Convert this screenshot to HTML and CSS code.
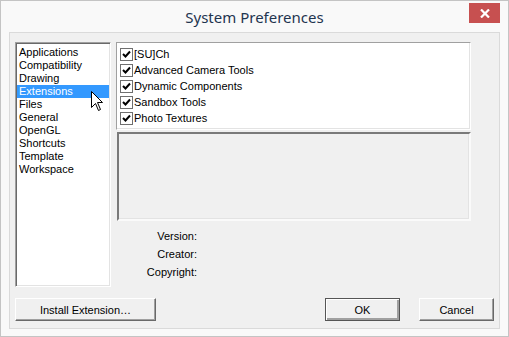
FILE: index.html
```html
<!DOCTYPE html>
<html lang="en">
<head>
    <meta charset="UTF-8">
    <title>System Preferences</title>
    <link rel="stylesheet" href="styles.css">
</head>
<body>
    <div class="window">
        <div class="titlebar">
            <span></span>
            <div class="title">System Preferences</div>
            <div class="close-wrap">
                <button class="close" type="button">
                    <svg width="10" height="9" viewBox="0 0 10 9">
                        <path d="M1 0.5 L9 8.5 M9 0.5 L1 8.5" stroke="#fff" stroke-width="2.2"/>
                    </svg>
                </button>
            </div>
        </div>
        <div class="client">
            <div class="main">
                <ul class="listbox">
                    <li>Applications</li>
                    <li>Compatibility</li>
                    <li>Drawing</li>
                    <li class="selected">Extensions</li>
                    <li>Files</li>
                    <li>General</li>
                    <li>OpenGL</li>
                    <li>Shortcuts</li>
                    <li>Template</li>
                    <li>Workspace</li>
                    <svg class="cursor" width="13" height="20" viewBox="0 0 13 20">
                        <path d="M0.5 0.5 L0.5 16.5 L4.5 12.5 L7.5 19.5 L9.5 18.5 L6.5 11.5 L11.5 11.5 Z" fill="#fff" stroke="#000" stroke-width="1"/>
                    </svg>
                </ul>
                <div class="right">
                    <div class="checklist">
                        <label class="check"><span class="box"></span>[SU]Ch</label>
                        <label class="check"><span class="box"></span>Advanced Camera Tools</label>
                        <label class="check"><span class="box"></span>Dynamic Components</label>
                        <label class="check"><span class="box"></span>Sandbox Tools</label>
                        <label class="check"><span class="box"></span>Photo Textures</label>
                    </div>
                    <div class="description"></div>
                    <div class="info">
                        <div class="info-row">Version:</div>
                        <div class="info-row">Creator:</div>
                        <div class="info-row">Copyright:</div>
                    </div>
                </div>
            </div>
            <div class="buttons">
                <button class="btn install" type="button">Install Extension…</button>
                <div class="btn-group">
                    <button class="btn default" type="button">OK</button>
                    <button class="btn" type="button">Cancel</button>
                </div>
            </div>
        </div>
    </div>
</body>
</html>
```
FILE: styles.css
```css
body {
    margin: 0;
    padding: 0;
    background: #fff;
    font-family: "Liberation Sans", Arial, sans-serif;
    font-size: 11px;
    color: #000;
}
.window {
    width: 509px;
    height: 337px;
    box-sizing: border-box;
    border: 1px solid #c4c4c4;
    background: #f9f9f9;
    padding: 0 8px 8px 8px;
    display: flex;
    flex-direction: column;
}
.titlebar {
    height: 31px;
    display: grid;
    grid-template-columns: 1fr auto 1fr;
}
.title {
    font-family: "Noto Sans", sans-serif;
    font-size: 15px;
    color: #1f3550;
    line-height: 33px;
}
.close-wrap {
    display: flex;
    justify-content: flex-end;
    align-items: flex-start;
}
.close {
    width: 31px;
    height: 20px;
    margin-top: 2px;
    border: none;
    padding: 0;
    background: #c75050;
    display: flex;
    align-items: center;
    justify-content: center;
}
.client {
    flex: 1;
    background: #f0f0f0;
    border: 1px solid #dadada;
    padding: 9px 5px 7px 5px;
    display: flex;
    flex-direction: column;
}
.main {
    display: flex;
    gap: 5px;
    height: 245px;
}
.listbox {
    position: relative;
    width: 96px;
    margin: 0;
    padding: 3px 0 0 0;
    box-sizing: border-box;
    list-style: none;
    background: #fff;
    border-top: 1px solid #a0a0a0;
    border-left: 1px solid #a0a0a0;
    border-right: 1px solid #fff;
    border-bottom: 1px solid #fff;
    box-shadow: inset 1px 1px 0 #696969, inset -1px -1px 0 #e3e3e3;
}
.listbox li {
    height: 13px;
    line-height: 13px;
    padding-left: 2px;
    margin: 0 1px;
}
.listbox li.selected {
    background: #3399ff;
    color: #fff;
}
.cursor {
    position: absolute;
    left: 75px;
    top: 48px;
}
.right {
    width: 355px;
    display: flex;
    flex-direction: column;
}
.checklist {
    height: 88px;
    box-sizing: border-box;
    background: #fff;
    padding: 3px 0 0 3px;
    border-top: 1px solid #a0a0a0;
    border-left: 1px solid #a0a0a0;
    border-right: 1px solid #fff;
    border-bottom: 1px solid #fff;
    box-shadow: inset -1px -1px 0 #e3e3e3;
}
.check {
    display: flex;
    align-items: center;
    height: 16px;
    gap: 1px;
}
.box {
    width: 11px;
    height: 11px;
    border: 1px solid #6f6f6f;
    background: #fff url("data:image/svg+xml,%3Csvg xmlns='http://www.w3.org/2000/svg' width='11' height='11'%3E%3Cpath d='M2 5 L4.5 7.5 L9 2.5' fill='none' stroke='%23000' stroke-width='2'/%3E%3C/svg%3E") no-repeat;
}
.description {
    height: 89px;
    margin-top: 2px;
    box-sizing: border-box;
    margin-left: 1px;
    border-top: 2px solid #7a7a7a;
    border-left: 2px solid #7a7a7a;
    border-right: 2px solid #fafafa;
    border-bottom: 2px solid #fafafa;
    box-shadow: inset -1px -1px 0 #e3e3e3;
}
.info {
    margin-top: 6px;
    width: 81px;
    text-align: right;
}
.info-row {
    height: 18px;
    line-height: 18px;
}
.buttons {
    display: flex;
    justify-content: space-between;
    margin-top: 11px;
}
.btn-group {
    display: flex;
    gap: 19px;
}
.btn {
    height: 23px;
    width: 75px;
    font-family: "Liberation Sans", Arial, sans-serif;
    font-size: 11px;
    color: #000;
    background: #f0f0f0;
    border-top: 1px solid #fff;
    border-left: 1px solid #fff;
    border-right: 1px solid #696969;
    border-bottom: 1px solid #696969;
    box-shadow: inset -1px -1px 0 #a0a0a0;
    padding: 0;
}
.btn.install {
    width: 141px;
}
.btn.default {
    outline: 1px solid #555;
    outline-offset: -1px;
    border-color: #555;
    box-shadow: inset 1px 1px 0 #fff, inset -2px -2px 0 #a0a0a0;
}
```
